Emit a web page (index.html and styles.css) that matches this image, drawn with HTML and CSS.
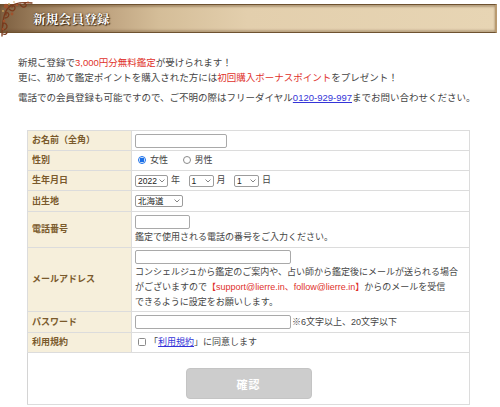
FILE: index.html
```html
<!DOCTYPE html>
<html lang="ja">
<head>
<meta charset="utf-8">
<title>新規会員登録</title>
<link rel="stylesheet" href="styles.css">
</head>
<body>
<div class="banner">
  <svg class="ornament" width="34" height="38" viewBox="0 0 34 38" aria-hidden="true">
    <g fill="none" stroke="#7a3a1c" stroke-width="1.3" stroke-linecap="round">
      <path d="M2 36 C2 24 3 14 8 8 C13 3 22 2 32 3"/>
      <path d="M4 30 C7 29 8 26 6 24 C4 22 2 24 3 26"/>
      <path d="M9 9 C12 12 15 11 15 8 C15 6 13 5 12 7"/>
      <path d="M20 4 C21 7 24 8 26 6 C27 4 25 3 24 4"/>
      <path d="M5 18 C8 18 10 15 8 13 C7 12 5 13 6 15"/>
      <path d="M3 34 C5 35 7 34 7 32"/>
    </g>
    <g fill="#a0522d">
      <circle cx="6" cy="6" r="2.2"/>
      <circle cx="12" cy="14" r="1.4"/>
      <circle cx="4" cy="21" r="1.3"/>
      <circle cx="17" cy="5" r="1.3"/>
      <circle cx="28" cy="2.5" r="1.1"/>
      <circle cx="3" cy="29" r="1.1"/>
    </g>
    <g fill="#c8a25a">
      <circle cx="9" cy="4" r="0.9"/>
      <circle cx="3" cy="11" r="0.9"/>
      <circle cx="14" cy="2" r="0.8"/>
    </g>
  </svg>
  <h1 class="title">新規会員登録</h1>
</div>

<div class="intro">
  <p>新規ご登録で<span class="red">3,000円分無料鑑定</span>が受けられます！<br>更に、初めて鑑定ポイントを購入された方には<span class="red">初回購入ボーナスポイント</span>をプレゼント！</p>
  <p class="tel">電話での会員登録も可能ですので、ご不明の際はフリーダイヤル<a class="link" href="#">0120-929-997</a>までお問い合わせください。</p>
</div>

<table class="form">
  <tr class="r20">
    <th>お名前（全角）</th>
    <td><span class="input w-name"></span></td>
  </tr>
  <tr class="r20">
    <th>性別</th>
    <td>
      <span class="radio checked"></span><span class="opt">女性</span>
      <span class="radio second"></span><span class="opt">男性</span>
    </td>
  </tr>
  <tr class="r20">
    <th>生年月日</th>
    <td>
      <span class="sel w-year">2022<svg class="chev" width="6" height="4" viewBox="0 0 6 4"><path d="M0.5 0.5 L3 3 L5.5 0.5" fill="none" stroke="#666" stroke-width="0.8"/></svg></span><span class="unit">年</span>
      <span class="sel w-day">1<svg class="chev" width="6" height="4" viewBox="0 0 6 4"><path d="M0.5 0.5 L3 3 L5.5 0.5" fill="none" stroke="#666" stroke-width="0.8"/></svg></span><span class="unit">月</span>
      <span class="sel w-day">1<svg class="chev" width="6" height="4" viewBox="0 0 6 4"><path d="M0.5 0.5 L3 3 L5.5 0.5" fill="none" stroke="#666" stroke-width="0.8"/></svg></span><span class="unit">日</span>
    </td>
  </tr>
  <tr class="r21">
    <th>出生地</th>
    <td><span class="sel w-pref">北海道<svg class="chev" width="6" height="4" viewBox="0 0 6 4"><path d="M0.5 0.5 L3 3 L5.5 0.5" fill="none" stroke="#666" stroke-width="0.8"/></svg></span></td>
  </tr>
  <tr class="r36">
    <th>電話番号</th>
    <td><span class="input w-tel"></span><div class="note">鑑定で使用される電話の番号をご入力ください。</div></td>
  </tr>
  <tr class="r64">
    <th>メールアドレス</th>
    <td><span class="input w-mail"></span><div class="note">コンシェルジュから鑑定のご案内や、占い師から鑑定後にメールが送られる場合<br>がございますので<span class="red">【support@lierre.in、follow@lierre.in】</span>からのメールを受信<br>できるように設定をお願いします。</div></td>
  </tr>
  <tr class="r21">
    <th>パスワード</th>
    <td><span class="input w-mail"></span><span class="hint">※6文字以上、20文字以下</span></td>
  </tr>
  <tr class="r20">
    <th>利用規約</th>
    <td><span class="check"></span><span class="agree">「<a class="link" href="#">利用規約</a>」に同意します</span></td>
  </tr>
  <tr class="submit-row">
    <td colspan="2"><div class="submit"><button class="btn" type="button">確認</button></div></td>
  </tr>
</table>
</body>
</html>
```
FILE: styles.css
```css
html, body {
  margin: 0;
  padding: 0;
  background: #fff;
}
body {
  font-family: "Liberation Sans", "Noto Sans CJK JP", sans-serif;
  font-size: 9.5px;
  color: #444;
}

.banner {
  position: relative;
  margin-top: 4px;
  width: 495px;
  height: 27px;
  border-top: 1px solid #6e5230;
  border-bottom: 1px solid #6e5230;
  border-right: 2px solid #b99b70;
  background: linear-gradient(to right, #7d5f40 0%, #9c7f5d 8%, #b89b78 18%, #d4bd98 32%, #e3cfad 50%, #e7d5b4 100%);
  box-shadow: inset 0 2px 2px rgba(90, 60, 30, 0.35), inset 0 -2px 2px rgba(90, 60, 30, 0.3);
  display: flex;
  align-items: center;
}
.ornament {
  position: absolute;
  left: 0;
  top: -5px;
}
.title {
  margin: 0 0 0 33px;
  font-family: "Noto Serif CJK JP", "Liberation Serif", "Noto Sans CJK JP", serif;
  font-size: 12.5px;
  font-weight: bold;
  color: #fff;
  letter-spacing: 0.3px;
  text-shadow: 0 0 2px #3e2a14, 1px 1px 1px #3e2a14;
}

.intro {
  margin: 22px 0 0 18px;
}
.intro p {
  margin: 0;
  line-height: 15px;
}
.intro .tel {
  margin-top: 5px;
}
.red {
  color: #e0312b;
}
.link {
  color: #3434d8;
  text-decoration: underline;
}

.form {
  margin: 25px 0 0 27px;
  width: 443px;
  border-collapse: collapse;
  border: 1px solid #d4d4d4;
  font-size: 9px;
}
.form th,
.form td {
  border: 1px solid #dcdcdc;
  padding: 0 3px;
  vertical-align: middle;
  text-align: left;
  line-height: 15px;
}
.form th {
  width: 96px;
  padding-left: 4px;
  background: #f6efdb;
  color: #7a5a2c;
  font-weight: bold;
}
.r20 { height: 20px; }
.r21 { height: 21px; }
.r36 { height: 36px; }
.r64 { height: 64px; }

.input {
  display: inline-block;
  vertical-align: middle;
  height: 14px;
  box-sizing: border-box;
  border: 1px solid #a9a9a9;
  border-radius: 2px;
  background: #fff;
}
.w-name { width: 92px; }
.w-tel { width: 55px; }
.w-mail { width: 156px; }

.note {
  line-height: 15px;
  white-space: nowrap;
}
.hint {
  margin-left: 1px;
  vertical-align: middle;
}

.radio {
  display: inline-block;
  vertical-align: middle;
  width: 8px;
  height: 8px;
  box-sizing: border-box;
  border-radius: 50%;
  border: 1px solid #8a8a8a;
  background: #fff;
  margin-left: 3px;
  position: relative;
  top: -1px;
}
.radio.checked {
  border: 1px solid #1a6fe8;
  background: radial-gradient(circle, #1a6fe8 0 2.2px, #fff 2.6px);
}
.radio.second {
  margin-left: 12px;
}
.opt {
  margin-left: 4px;
}

.sel {
  display: inline-flex;
  align-items: center;
  justify-content: space-between;
  vertical-align: middle;
  height: 12px;
  box-sizing: border-box;
  border: 1px solid #9c9c9c;
  border-radius: 2px;
  padding: 0 2px 0 2px;
  font-size: 8.5px;
  line-height: 10px;
  color: #222;
  background: #fff;
}
.w-year { width: 33px; }
.w-day { width: 25px; margin-left: 6px; }
.w-pref { width: 48px; }
.chev {
  display: block;
}
.unit {
  margin-left: 3px;
}

.check {
  display: inline-block;
  vertical-align: middle;
  width: 8px;
  height: 8px;
  box-sizing: border-box;
  border: 1px solid #8a8a8a;
  border-radius: 1.5px;
  margin-left: 3px;
  position: relative;
  top: -1px;
}
.agree {
  margin-left: 3px;
}

.submit-row td {
  border-left: 1px solid #d4d4d4;
  padding: 0;
}
.submit {
  display: flex;
  justify-content: center;
  padding: 15px 0 5px;
}
.btn {
  width: 126px;
  height: 31px;
  border: 1px solid #c4c4c4;
  border-radius: 4px;
  background: #cdcdcd;
  color: #fff;
  font-family: "Liberation Sans", "Noto Sans CJK JP", sans-serif;
  font-size: 11px;
  font-weight: bold;
  letter-spacing: 1px;
}
```
